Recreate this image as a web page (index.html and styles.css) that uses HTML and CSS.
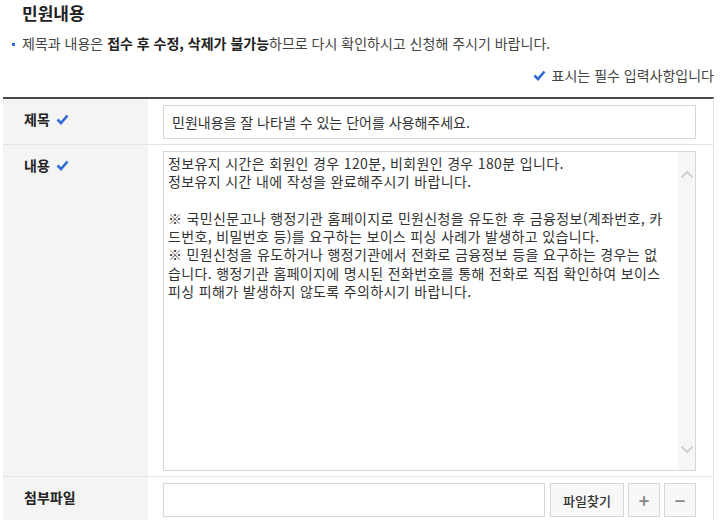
FILE: index.html
```html
<!DOCTYPE html>
<html lang="ko">
<head>
  <meta charset="UTF-8">
  <title>민원내용</title>
  <link rel="stylesheet" href="styles.css">
</head>
<body>
  <div class="page">
    <h2 class="sec-title">민원내용</h2>
    <p class="notice"><span class="bullet"></span>제목과 내용은 <strong>접수 후 수정, 삭제가 불가능</strong>하므로 다시 확인하시고 신청해 주시기 바랍니다.</p>
    <p class="required">
      <svg class="check" width="13" height="11" viewBox="0 0 13 11"><path d="M1.5 5.5 L5 9 L11.5 1.5" fill="none" stroke="currentColor" stroke-width="2.6"/></svg>
      <span>표시는 필수 입력사항입니다</span>
    </p>

    <div class="form-table">
      <div class="label">제목
        <svg class="check" width="13" height="11" viewBox="0 0 13 11"><path d="M1.5 5.5 L5 9 L11.5 1.5" fill="none" stroke="currentColor" stroke-width="2.6"/></svg>
      </div>
      <div class="field">
        <input class="text-input" type="text" value="민원내용을 잘 나타낼 수 있는 단어를 사용해주세요.">
      </div>

      <div class="label">내용
        <svg class="check" width="13" height="11" viewBox="0 0 13 11"><path d="M1.5 5.5 L5 9 L11.5 1.5" fill="none" stroke="currentColor" stroke-width="2.6"/></svg>
      </div>
      <div class="field">
        <div class="textarea-box">
          <textarea class="content">정보유지 시간은 회원인 경우 120분, 비회원인 경우 180분 입니다.
정보유지 시간 내에 작성을 완료해주시기 바랍니다.

※ 국민신문고나 행정기관 홈페이지로 민원신청을 유도한 후 금융정보(계좌번호, 카드번호, 비밀번호 등)를 요구하는 보이스 피싱 사례가 발생하고 있습니다.
※ 민원신청을 유도하거나 행정기관에서 전화로 금융정보 등을 요구하는 경우는 없습니다. 행정기관 홈페이지에 명시된 전화번호를 통해 전화로 직접 확인하여 보이스 피싱 피해가 발생하지 않도록 주의하시기 바랍니다.</textarea>
          <div class="scrollbar">
            <svg width="14" height="9" viewBox="0 0 14 9"><path d="M1.5 7.5 L7 2 L12.5 7.5" fill="none" stroke="currentColor" stroke-width="1.6"/></svg>
            <svg width="14" height="9" viewBox="0 0 14 9"><path d="M1.5 1.5 L7 7 L12.5 1.5" fill="none" stroke="currentColor" stroke-width="1.6"/></svg>
          </div>
        </div>
      </div>

      <div class="label">첨부파일</div>
      <div class="field file-row">
        <input class="text-input file-name" type="text">
        <button class="btn btn-find">파일찾기</button>
        <button class="btn btn-icon">+</button>
        <button class="btn btn-icon">−</button>
      </div>
    </div>
  </div>
</body>
</html>
```

FILE: styles.css
```css
:root {
  --text: #333333;
  --blue: #2f6bd1;
  --line: #e4e4e4;
  --input-line: #d6d6d6;
  --label-bg: #f4f4f4;
}
*, *::before, *::after { box-sizing: border-box; margin: 0; padding: 0; }
body {
  font-family: "Noto Sans CJK KR", "Noto Sans", sans-serif;
  color: var(--text);
  background: #fff;
  overflow: hidden;
}
.page { padding: 0 6px 0 3px; }

.sec-title {
  font-size: 17px; font-weight: 700; color: #222;
  line-height: 22px; padding: 2px 0 0 19px;
}
.notice {
  font-size: 14px; color: #444; line-height: 20px;
  margin-top: 9px; padding-left: 9px;
}
.notice strong { color: #222; font-weight: 700; }
.bullet {
  display: inline-block; vertical-align: middle;
  width: 3px; height: 3px; background: var(--blue);
  margin: 0 7px 2px 0;
}
.required {
  display: flex; justify-content: flex-end; align-items: center; gap: 6px;
  font-size: 14px; color: #444; line-height: 20px;
  margin-top: 12px;
}
.check { color: var(--blue); flex-shrink: 0; }

.form-table {
  display: grid; grid-template-columns: 145px 1fr;
  margin-top: 12px;
  border-top: 2px solid #4a4a4a;
  border-right: 1px solid var(--line);
}
.label {
  display: flex; align-items: flex-start; gap: 6px;
  background: var(--label-bg);
  padding: 11px 0 0 21px;
  font-size: 14px; font-weight: 700; color: #222; line-height: 18px;
  border-bottom: 1px solid var(--line);
}
.label .check { margin-top: 4px; }
.field {
  padding: 6px 17px 5px 15px;
  border-bottom: 1px solid var(--line);
}
.text-input {
  display: block; width: 100%; height: 34px;
  border: 1px solid var(--input-line);
  padding: 0 8px;
  font-family: inherit; font-size: 14px; color: var(--text);
  outline: none;
}
.textarea-box {
  display: flex; height: 320px;
  border: 1px solid var(--input-line);
}
.content {
  flex: 1; border: none; resize: none; outline: none; overflow: hidden;
  padding: 2px 13px 0 4px;
  font-family: inherit; font-size: 14px; letter-spacing: 0.35px; line-height: 18.3px; color: var(--text);
  word-break: break-all;
}
.scrollbar {
  width: 17px; background: #f6f6f6;
  display: flex; flex-direction: column; justify-content: space-between; align-items: center;
  padding: 18px 0 16px;
  color: #c8c8c8;
}
.file-row {
  display: flex; gap: 4px;
  border-bottom: none;
}
.file-name { flex: 1; margin-right: 1px; }
.btn {
  height: 34px;
  border: 1px solid var(--input-line);
  background: #f8f8f8;
  font-family: inherit; font-size: 13px; font-weight: 500; color: #333;
  cursor: pointer;
}
.btn-find { width: 74px; }
.btn-icon { width: 32px; font-size: 18px; font-weight: 700; color: #888; line-height: 1; }
```
